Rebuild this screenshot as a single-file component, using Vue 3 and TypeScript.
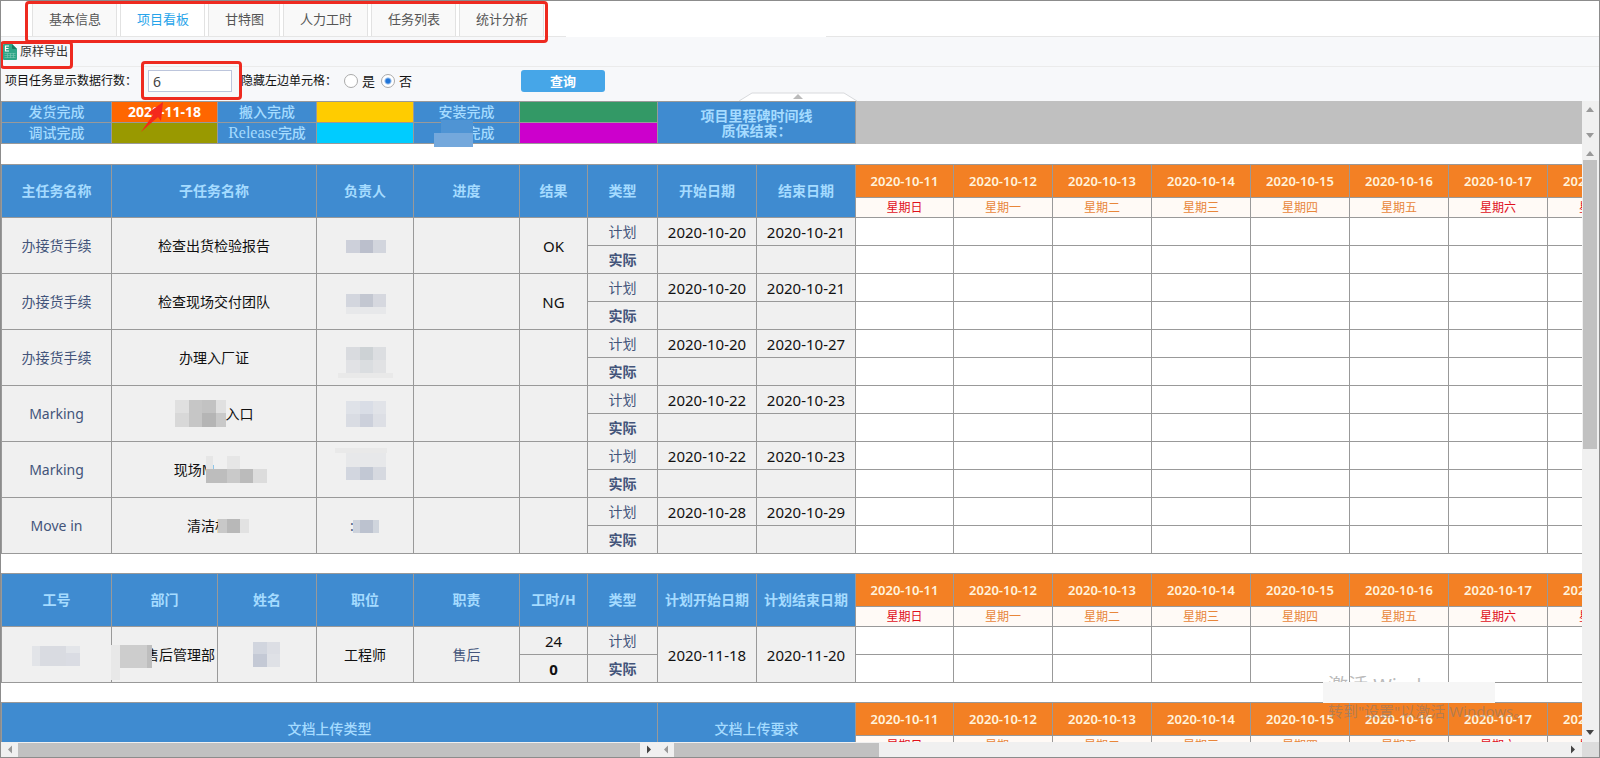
<script setup lang="ts">
import { ref } from 'vue'

type Tile = [x: number, y: number, w: number, h: number, fill: string]

interface Day { date: string; week: string; rest: boolean }
interface Task {
  main: string
  sub: string
  hide?: 'before' | 'long' | 'short'
  owner: Tile[]
  ownerText?: string
  result: string
  start: string
  end: string
}

const tabs = ['基本信息', '项目看板', '甘特图', '人力工时', '任务列表', '统计分析']
const active = ref('项目看板')
const rowCount = ref('6')
const hideLeft = ref('no')

const weekNames = ['日', '一', '二', '三', '四', '五', '六']
const days: Day[] = Array.from({ length: 8 }, (_, i) => ({
  date: `2020-10-${11 + i}`,
  week: `星期${weekNames[i % 7]}`,
  rest: i % 7 === 0 || i % 7 === 6,
}))

const columns = [110, 106, 99, 97, 106, 68, 70, 99, 99]

const tasks: Task[] = [
  { main: '办接货手续', sub: '检查出货检验报告', result: 'OK', start: '2020-10-20', end: '2020-10-21',
    owner: [[21, 14, 14, 13, '#cdd0da'], [35, 14, 13, 13, '#bbbfcc'], [48, 14, 13, 13, '#d2d5dd']] },
  { main: '办接货手续', sub: '检查现场交付团队', result: 'NG', start: '2020-10-20', end: '2020-10-21',
    owner: [[21, 12, 14, 13, '#d3d6de'], [35, 12, 13, 13, '#c3c7d1'], [48, 12, 13, 13, '#d6d8df'], [21, 25, 40, 7, '#e7e8ea']] },
  { main: '办接货手续', sub: '办理入厂证', result: '', start: '2020-10-20', end: '2020-10-27',
    owner: [[21, 9, 14, 13, '#d9dbdf'], [35, 9, 13, 13, '#cdd2d5'], [48, 9, 13, 13, '#dcdee1'], [21, 22, 14, 13, '#e1e2e5'], [35, 22, 13, 13, '#dadde0'], [48, 22, 13, 13, '#e1e2e4'], [13, 35, 55, 5, '#e9e9e9']] },
  { main: 'Marking', sub: '入口', hide: 'before', result: '', start: '2020-10-22', end: '2020-10-23',
    owner: [[21, 7, 14, 13, '#dfe2e8'], [35, 7, 13, 13, '#d9dde6'], [48, 7, 13, 13, '#e1e3e8'], [21, 20, 14, 13, '#d9dce3'], [35, 20, 13, 13, '#ccd0db'], [48, 20, 13, 13, '#dddfe5']] },
  { main: 'Marking', sub: '现场M', hide: 'long', result: '', start: '2020-10-22', end: '2020-10-23',
    owner: [[10, -2, 52, 5, '#e9e9e9'], [21, 3, 40, 14, '#e7e8ea'], [21, 17, 14, 13, '#d2d6df'], [35, 17, 13, 13, '#c2c8d4'], [48, 17, 13, 13, '#d6d9e0']] },
  { main: 'Move in', sub: '清洁机', hide: 'short', result: '', start: '2020-10-28', end: '2020-10-29', ownerText: ':',
    owner: [[28, 14, 7, 13, '#ced3dc'], [35, 14, 13, 13, '#bcc2cf'], [48, 14, 6, 13, '#d0d5dd']] },
]

const staffId: Tile[] = [[15, 11, 8, 20, '#e2e4e8'], [23, 11, 26, 20, '#d9dbe1'], [49, 11, 14, 7, '#e3e5e9'], [49, 18, 14, 13, '#dadce3']]
const staffName: Tile[] = [[26, 7, 14, 12, '#d1d5de'], [40, 7, 13, 12, '#dcdee4'], [26, 19, 14, 13, '#c4c9d5'], [40, 19, 13, 13, '#dfe1e6']]
</script>

<template>
  <div class="page">
    <nav class="tabs">
      <button
        v-for="t in tabs" :key="t" type="button" class="tab"
        :class="{ on: t === active }" @click="active = t"
      >{{ t }}</button>
      <span class="mark mark-tabs"></span>
      <span class="blank"></span>
    </nav>

    <div class="toolbar">
      <button type="button" class="export">
        <svg width="14" height="16" viewBox="0 0 14 16">
          <path d="M1 0h8l5 5v10a1 1 0 0 1-1 1H1a1 1 0 0 1-1-1V1a1 1 0 0 1 1-1z" fill="#2fa688" />
          <path d="M9 0l5 5H10a1 1 0 0 1-1-1z" fill="#177a61" />
          <path d="M6 2H2.500v5H6M2.500 4.500H5.500" fill="none" stroke="#fff" stroke-width="1.200" />
          <path d="M1.500 9.500h11M1.500 11.500h11M1.500 13.500h11M4.500 9v5M7.500 9v5M10.500 9v5" stroke="#7cc8b4" stroke-width=".6" />
        </svg>
        <span>原样导出</span>
      </button>
      <span class="mark mark-export"></span>
    </div>

    <form class="query" @submit.prevent>
      <label class="rows-label" for="rows">项目任务显示数据行数：</label>
      <span class="rows-box">
        <input id="rows" v-model="rowCount" class="rows" type="text">
        <span class="mark mark-rows"></span>
        <svg class="arrow" width="30" height="34" viewBox="0 0 30 34">
          <path d="M22 1L7 12l5 2L0 31l17-15 3 4z" fill="#f4281c" />
        </svg>
      </span>
      <span class="hide-label">隐藏左边单元格：</span>
      <label class="choice"><input v-model="hideLeft" type="radio" name="hide" value="yes">是</label>
      <label class="choice"><input v-model="hideLeft" type="radio" name="hide" value="no">否</label>
      <button class="search" type="submit">查询</button>
      <svg class="handle" width="118" height="9" viewBox="0 0 118 9">
        <path d="M0 9L13 1h92l13 8" fill="#fff" stroke="#d8dadd" />
        <path d="M54 7l5-5 5 5z" fill="#bbb" />
      </svg>
    </form>

    <div class="board">
      <table class="grid left">
        <colgroup><col v-for="(w, i) in columns" :key="i" :style="{ width: w + 'px' }"></colgroup>
        <tbody>
          <tr class="stage">
            <th>发货完成</th><td class="c-orange">2020-11-18</td>
            <th>搬入完成</th><td class="c-yellow"></td>
            <th>安装完成</th><td class="c-green" colspan="2"></td>
            <th class="timeline" colspan="3" rowspan="2">项目里程碑时间线<br>质保结束：</th>
          </tr>
          <tr class="stage">
            <th>调试完成</th><td class="c-olive"></td>
            <th><span class="serif">Release</span>完成</th><td class="c-cyan"></td>
            <th class="masked">
              完成
              <svg class="stage-mask" width="39" height="27" viewBox="0 0 39 27">
                <path d="M7 0h32v14H7z" fill="#4f94d4" /><path d="M0 13h39v14H0z" fill="#74a8dc" />
              </svg>
            </th>
            <td class="c-magenta" colspan="2"></td>
          </tr>
        </tbody>
      </table>
      <div class="band"></div>
      <div class="vbar">
        <svg viewBox="0 0 16 16"><path d="M4 11l4-5 4 5z" fill="#999" /></svg>
        <svg viewBox="0 0 16 16"><path d="M4 5l4 5 4-5z" fill="#999" /></svg>
      </div>

      <div class="pane">
        <table class="grid left">
          <colgroup><col v-for="(w, i) in columns" :key="i" :style="{ width: w + 'px' }"></colgroup>
          <thead>
            <tr class="head">
              <th>主任务名称</th><th colspan="2">子任务名称</th><th>负责人</th><th>进度</th>
              <th>结果</th><th>类型</th><th>开始日期</th><th>结束日期</th>
            </tr>
          </thead>
          <tbody>
            <template v-for="(t, i) in tasks" :key="i">
              <tr>
                <td class="slate" rowspan="2">{{ t.main }}</td>
                <td colspan="2" rowspan="2">
                  <span class="sub">
                    <svg v-if="t.hide === 'before'" width="51" height="27" viewBox="0 0 51 27">
                      <path d="M0 0h14v13H0zM41 0h10v13H41z" fill="#e0e0e0" />
                      <path d="M0 13h14v14H0z" fill="#d8d8d8" />
                      <path d="M14 0h13v13H14zM14 13h13v14H14z" fill="#c6c6c6" />
                      <path d="M27 0h14v13H27z" fill="#c2c2c2" />
                      <path d="M27 13h14v14H27z" fill="#b5b5b5" />
                      <path d="M41 13h10v14H41z" fill="#c9c9c9" />
                    </svg>
                    <span>{{ t.sub }}</span>
                    <svg v-if="t.hide === 'long'" class="long" width="48" height="27" viewBox="0 0 48 27">
                      <path d="M0 0h7v13H0zM21 0h13v13H21z" fill="#e6e6e6" />
                      <path d="M0 13h21v14H0z" fill="#bdbdbd" />
                      <path d="M21 13h13v14H21z" fill="#c9c9c9" />
                      <path d="M34 13h13v14H34z" fill="#bbb" />
                      <path d="M47 13h14v14H47z" fill="#dcdcdc" />
                    </svg>
                    <svg v-if="t.hide === 'short'" class="short" width="23" height="16" viewBox="0 0 23 16">
                      <path d="M0 1h9v14H0z" fill="#c8c8c8" />
                      <path d="M9 1h13v14H9z" fill="#b8b8b8" />
                      <path d="M22 1h9v14H22z" fill="#e2e2e2" />
                    </svg>
                  </span>
                </td>
                <td class="masked slate" rowspan="2">
                  <span v-if="t.ownerText" class="owner-text">{{ t.ownerText }}</span>
                  <svg class="mosaic" width="80" height="40" viewBox="0 0 80 40">
                    <rect v-for="(r, k) in t.owner" :key="k" :x="r[0]" :y="r[1]" :width="r[2]" :height="r[3]" :fill="r[4]" />
                  </svg>
                </td>
                <td rowspan="2"></td>
                <td rowspan="2" class="num">{{ t.result }}</td>
                <td class="slate">计划</td>
                <td class="num">{{ t.start }}</td>
                <td class="num">{{ t.end }}</td>
              </tr>
              <tr><td class="slate bold">实际</td><td></td><td></td></tr>
            </template>
          </tbody>
        </table>

        <table class="grid left">
          <colgroup><col v-for="(w, i) in columns" :key="i" :style="{ width: w + 'px' }"></colgroup>
          <thead>
            <tr class="head">
              <th>工号</th><th>部门</th><th>姓名</th><th>职位</th><th>职责</th>
              <th>工时/H</th><th>类型</th><th>计划开始日期</th><th>计划结束日期</th>
            </tr>
          </thead>
          <tbody>
            <tr>
              <td class="masked" rowspan="2">
                <svg class="mosaic" width="80" height="40" viewBox="0 0 80 40">
                  <rect v-for="(r, k) in staffId" :key="k" :x="r[0]" :y="r[1]" :width="r[2]" :height="r[3]" :fill="r[4]" />
                </svg>
              </td>
              <td class="masked dept" rowspan="2">
                售后管理部
                <svg class="dept-mask" width="41" height="35" viewBox="0 0 41 35">
                  <path d="M0 0h9v35H0z" fill="#e8e8e8" /><path d="M9 0h27v23H9z" fill="#cdcdcd" /><path d="M36 0h5v23H36z" fill="#bebebe" />
                </svg>
              </td>
              <td class="masked" rowspan="2">
                <svg class="mosaic" width="80" height="40" viewBox="0 0 80 40">
                  <rect v-for="(r, k) in staffName" :key="k" :x="r[0]" :y="r[1]" :width="r[2]" :height="r[3]" :fill="r[4]" />
                </svg>
              </td>
              <td rowspan="2">工程师</td>
              <td class="slate" rowspan="2">售后</td>
              <td class="num">24</td>
              <td class="slate">计划</td>
              <td class="num" rowspan="2">2020-11-18</td>
              <td class="num" rowspan="2">2020-11-20</td>
            </tr>
            <tr><td class="num bold">0</td><td class="slate bold">实际</td></tr>
          </tbody>
        </table>

        <table class="grid left">
          <colgroup><col v-for="(w, i) in columns" :key="i" :style="{ width: w + 'px' }"></colgroup>
          <thead>
            <tr class="head doc"><th colspan="7">文档上传类型</th><th colspan="2">文档上传要求</th></tr>
          </thead>
        </table>
      </div>

      <div class="pane">
        <table v-for="(n, k) in [12, 2, 0]" :key="k" class="grid days">
          <thead>
            <tr><th v-for="d in days" :key="d.date" class="date">{{ d.date }}</th></tr>
            <tr><th v-for="d in days" :key="d.date" class="week" :class="{ rest: d.rest }">{{ d.week }}</th></tr>
          </thead>
          <tbody>
            <tr v-for="r in n" :key="r"><td v-for="d in days" :key="d.date"></td></tr>
          </tbody>
        </table>
      </div>

      <div class="vbar tall">
        <svg viewBox="0 0 16 16"><path d="M4 12l4-5 4 5z" fill="#999" /></svg>
        <div class="vtrack"><div class="vthumb"></div></div>
        <svg viewBox="0 0 16 16"><path d="M4 4l4 5 4-5z" fill="#444" /></svg>
      </div>

      <div class="foot">
        <div class="hbar outer">
          <svg viewBox="0 0 17 15"><path d="M11 3.500v8L7 7.500z" fill="#999" /></svg>
          <div class="htrack"><div class="hthumb"></div></div>
          <svg viewBox="0 0 17 15"><path d="M7 3.500v8l4-4z" fill="#444" /></svg>
        </div>
        <div class="hbar inner">
          <svg viewBox="0 0 17 15"><path d="M11 3.500v8L7 7.500z" fill="#999" /></svg>
          <div class="htrack"><div class="hthumb part"></div></div>
          <svg viewBox="0 0 17 15"><path d="M6 3.500v8l4-4z" fill="#444" /></svg>
        </div>
        <div class="corner"></div>
      </div>

      <div class="notice">
        <div class="notice-title">激活 Windows</div>
        <div class="notice-text">转到"设置"以激活 Windows。</div>
      </div>
    </div>
  </div>
</template>

<style>
html, body { margin: 0; background: #fff; }
</style>

<style scoped>
* { box-sizing: border-box; }
.page {
  display: flex;
  flex-direction: column;
  height: 100vh;
  overflow: hidden;
  border: 1px solid #8c8c8c;
  background: #fff;
  color: #111;
  font: 14px/20px "Noto Sans", "Noto Sans CJK SC", sans-serif;
}
button, input { font: inherit; margin: 0; }
svg { display: block; overflow: visible; }

.tabs {
  position: relative;
  display: flex;
  gap: 3px;
  height: 36px;
  flex: none;
  padding: 2px 31px 0;
  border-bottom: 1px solid #e6e6e6;
  font-size: 13px;
}
.tab {
  padding: 0 15px 1px 16px;
  border: 1px solid #e2e2e2;
  border-width: 0 1px;
  background: #f9f9f9;
  color: #555;
}
.tab.on { background: #fff; color: #27a4ea; }
.mark {
  position: absolute;
  z-index: 3;
  border: 3px solid #ee2a20;
  border-radius: 4px;
  pointer-events: none;
}
.mark-tabs { left: 24px; top: 0; width: 523px; height: 42px; }
.blank { position: absolute; left: 565px; top: 35px; width: 260px; height: 5px; background: #fff; }

.toolbar {
  position: relative;
  display: flex;
  align-items: center;
  flex: none;
  height: 30px;
  background: #f7f8fa;
  border-bottom: 1px solid #ebebeb;
}
.export {
  display: flex;
  align-items: center;
  gap: 3px;
  padding: 0 2px;
  border: 0;
  background: none;
  color: #333;
  font-size: 12px;
}
.mark-export { left: -1px; top: 4px; width: 73px; height: 28px; }

.query {
  position: relative;
  display: flex;
  align-items: center;
  flex: none;
  height: 34px;
  padding: 0 0 6px 4px;
  background: #f7f8fa;
  font-size: 12px;
}
.rows-label { width: 143px; }
.rows-box { position: relative; width: 84px; margin-right: 9px; }
.rows {
  display: block;
  width: 100%;
  height: 22px;
  padding: 0 4px;
  border: 1px solid #bcc5dc;
  background: #fff;
  color: #444;
  font-size: 14px;
}
.mark-rows { left: -7px; top: -9px; width: 101px; height: 39px; }
.arrow { position: absolute; left: -7px; top: 31px; z-index: 4; }
.hide-label { width: 103px; }
.choice { display: flex; align-items: center; gap: 4px; width: 37px; font-size: 13px; }
.choice input {
  appearance: none;
  width: 14px;
  height: 14px;
  border: 1px solid #aaa;
  border-radius: 50%;
  background: #fff;
}
.choice input:checked { background: radial-gradient(circle, #1f74d8 2px, #fff 4px); }
.search {
  width: 84px;
  height: 22px;
  margin-left: 103px;
  padding: 0;
  border: 0;
  border-radius: 3px;
  background: #46a6e8;
  color: #fff;
  font-size: 13px;
  font-weight: 700;
}
.handle { position: absolute; left: 738px; bottom: 0; }

.board {
  position: relative;
  flex: 1;
  min-height: 0;
  display: grid;
  grid-template-columns: 855px minmax(0, 1fr) 17px;
  grid-template-rows: 43px minmax(0, 1fr) 15px;
}
.grid {
  border-collapse: separate;
  border-spacing: 0;
  table-layout: fixed;
  border-top: 1px solid #999;
}
.grid th, .grid td {
  padding: 0;
  border: 1px solid #999;
  border-width: 0 1px 1px 0;
  text-align: center;
  vertical-align: middle;
  white-space: nowrap;
  overflow: hidden;
}
.left { width: 855px; border-left: 1px solid #999; }
.left th { background: #3f8bd0; color: #a5dbff; font-weight: 700; }
.left td { height: 28px; background: #f0f0f0; }
.left .stage th, .left .stage td { height: 21px; line-height: 20px; }
.left .stage th { font-weight: 500; }
.left .stage .timeline { line-height: 15px; font-weight: 700; }
.serif { font-family: "Liberation Serif", serif; font-size: 16px; }
.left .stage .c-orange { background: #ff6600; color: #fff; font-weight: 700; }
.left .c-yellow { background: #ffcc00; }
.left .c-green { background: #339966; }
.left .c-olive { background: #999900; }
.left .c-cyan { background: #00ccff; }
.left .c-magenta { background: #cc00cc; }
.grid .masked { position: relative; overflow: visible; }
.left .stage .masked { padding-left: 28px; }
.stage-mask { position: absolute; z-index: 1; left: 20px; top: -3px; }
.band { background: #c0c0c0; }

.pane {
  display: flex;
  flex-direction: column;
  align-items: flex-start;
  gap: 19px;
  padding-top: 20px;
  min-height: 0;
  overflow: hidden;
}
.pane .grid { flex: none; }
.head th { height: 53px; }
.left .doc th { font-weight: 500; }
.slate { color: #43547a; }
.bold { font-weight: 700; }
.num { font-size: 15px; }
.sub { display: flex; align-items: center; justify-content: center; }
.long, .short { position: relative; flex: none; }
.long { margin-left: -8px; }
.short { margin-left: -11px; }
.mosaic { position: absolute; left: calc(50% - 40px); top: calc(50% - 20px); }
.owner-text { padding-right: 26px; }
.grid .dept { padding-right: 2px; text-align: right; }
.dept-mask { position: absolute; left: -1px; top: 18px; }

.days { width: 791px; }
.days th:first-child { width: 98px; }
.days th { width: 99px; }
.days td { height: 28px; background: #fff; }
.days .date { height: 33px; background: #f38024; color: #fff3dd; font-size: 13px; font-weight: 600; }
.days .week { height: 20px; background: #fffaf6; color: #e8863a; font-size: 12px; line-height: 18px; font-weight: 400; }
.days .week.rest { color: #e0101c; }

.vbar {
  display: flex;
  flex-direction: column;
  justify-content: space-between;
  min-height: 0;
  padding-right: 1px;
  background: #f0f0f0;
}
.vbar svg { width: 16px; height: 16px; flex: none; }
.vtrack { flex: 1; }
.vthumb { width: 14px; height: 51%; margin: 0 1px; background: #c1c1c1; }
.foot { grid-column: 1 / 4; display: flex; background: #f0f0f0; }
.hbar { display: flex; }
.hbar svg { width: 17px; height: 15px; flex: none; }
.outer { width: 656px; flex: none; }
.inner { flex: 1; }
.htrack { flex: 1; }
.hthumb { height: 14px; margin-top: 1px; background: #c1c1c1; }
.part { width: 23%; }
.corner { width: 17px; background: #dcdcdc; }

.notice { position: absolute; right: 79px; bottom: 36px; width: 197px; color: rgba(120, 120, 120, .5); }
.notice-title { height: 6px; padding-left: 5px; overflow: hidden; font-size: 20px; line-height: 20px; }
.notice-text { padding: 19px 0 0 5px; font-size: 15px; line-height: 20px; white-space: nowrap; }
.notice::after {
  content: "";
  position: absolute;
  left: 0;
  top: 6px;
  width: 172px;
  height: 21px;
  background: #f6f6f6;
}
</style>
